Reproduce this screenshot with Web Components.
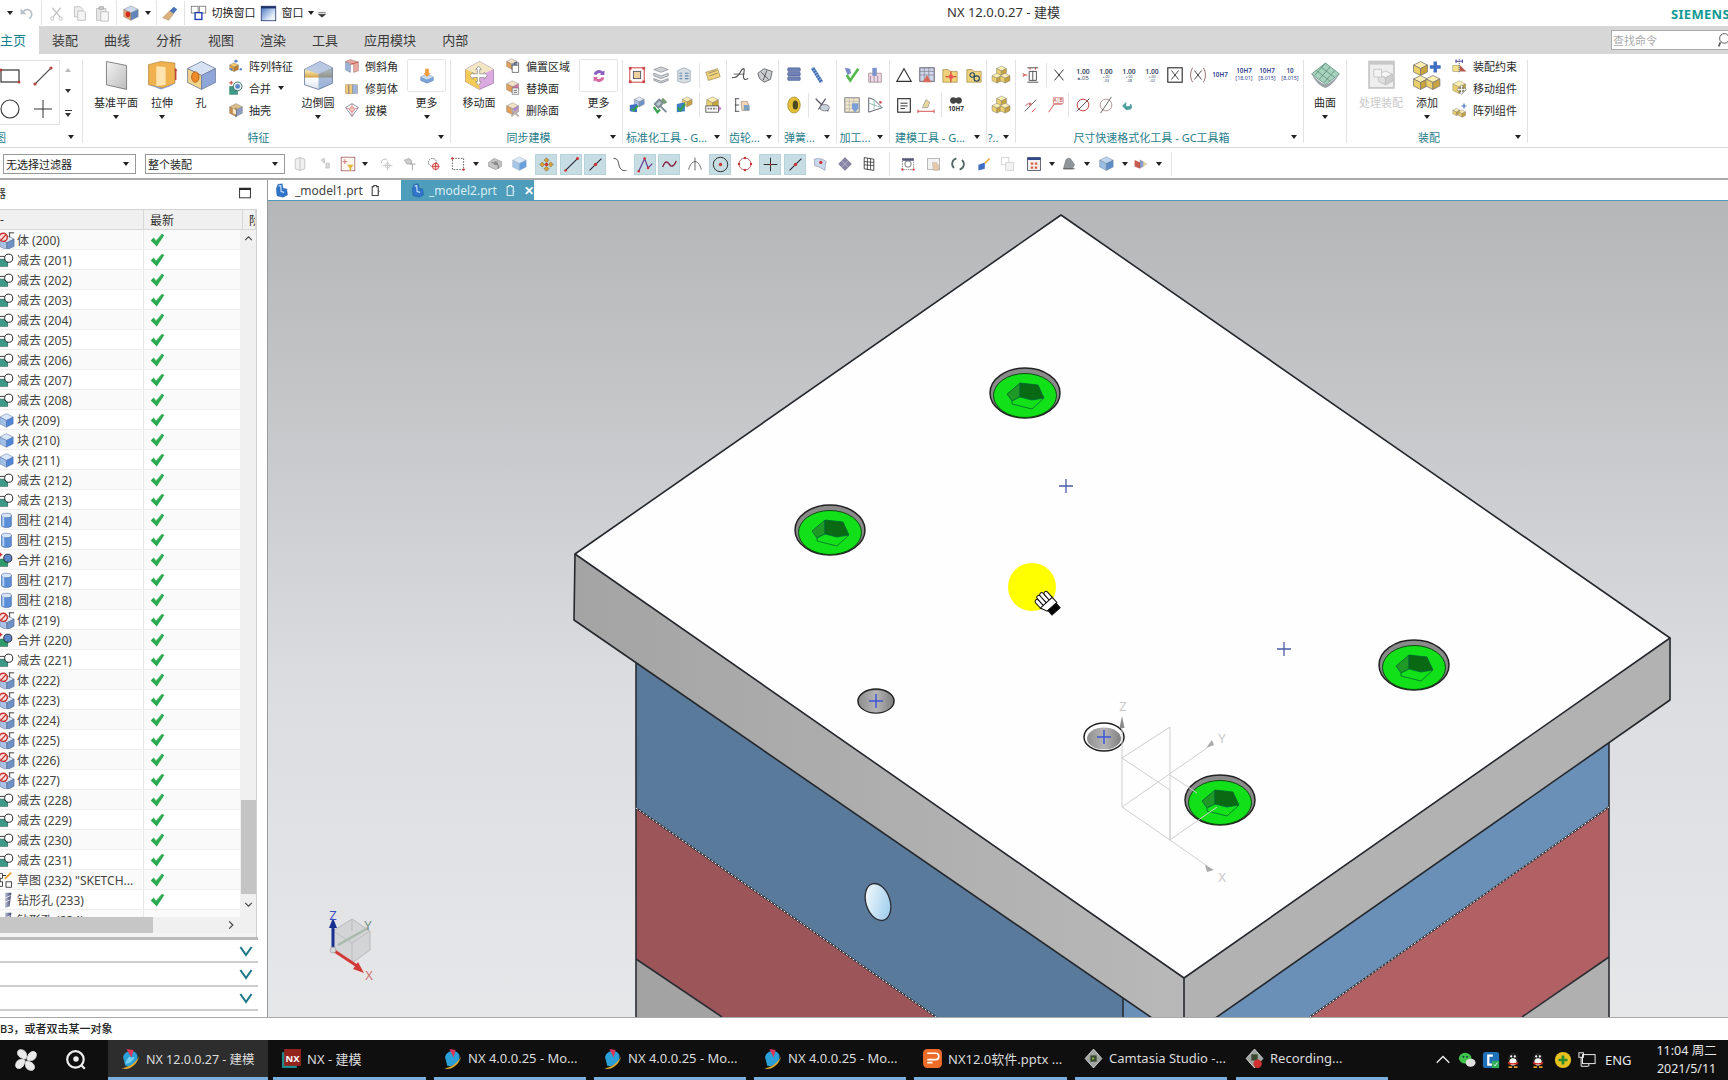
<!DOCTYPE html>
<html lang="zh-CN">
<head>
<meta charset="utf-8">
<title>NX 12.0.0.27 - 建模</title>
<style>
html,body{margin:0;padding:0;width:1728px;height:1080px;overflow:hidden;background:#fff}
body{display:flex;flex-direction:column;font-family:"Noto Sans","Noto Sans CJK SC",sans-serif;color:#333}
.main{display:flex;height:837px}
</style>
</head>
<body>
<nx-titlebar></nx-titlebar>
<nx-tabbar></nx-tabbar>
<nx-ribbon>
  <ribbon-group style="width:83px" label="图" clip>
    <sketch-gallery></sketch-gallery>
  </ribbon-group>
  <ribbon-group style="width:368px" label="特征">
    <big-btn style="margin-left:10px;width:46px" icon="datum" label="基准平面" caret></big-btn>
    <big-btn style="margin-left:3px;width:40px" icon="extrude" label="拉伸" caret></big-btn>
    <big-btn style="margin-left:4px;width:30px" icon="hole" label="孔"></big-btn>
    <tool-col style="margin-left:12px;width:68px">
      <small-btn icon="pattern" label="阵列特征"></small-btn>
      <small-btn icon="unite" label="合并" caret></small-btn>
      <small-btn icon="shell" label="抽壳"></small-btn>
    </tool-col>
    <big-btn style="margin-left:2px;width:40px" icon="blend" label="边倒圆" caret></big-btn>
    <tool-col style="margin-left:6px;width:54px">
      <small-btn icon="chamfer" label="倒斜角"></small-btn>
      <small-btn icon="trim" label="修剪体"></small-btn>
      <small-btn icon="draft" label="拔模"></small-btn>
    </tool-col>
    <big-btn style="margin-left:10px;width:37px" icon="more1" label="更多" caret boxed></big-btn>
  </ribbon-group>
  <ribbon-group style="width:172px" label="同步建模">
    <big-btn style="margin-left:10px;width:36px" icon="moveface" label="移动面"></big-btn>
    <tool-col style="margin-left:8px;width:70px">
      <small-btn icon="offset" label="偏置区域"></small-btn>
      <small-btn icon="replace" label="替换面"></small-btn>
      <small-btn icon="delface" label="删除面"></small-btn>
    </tool-col>
    <big-btn style="margin-left:5px;width:37px" icon="more2" label="更多" caret boxed></big-btn>
  </ribbon-group>
  <ribbon-group style="width:104px" label="标准化工具 - G..." stack>
    <tool-row class="r1" origin="623" items="637:std1 661:std2 684:std3 699:sep 713:std4"></tool-row>
    <tool-row origin="623" items="637:std5 661:std6 684:std7 699:sep 713:std8"></tool-row>
  </ribbon-group>
  <ribbon-group style="width:52px" label="齿轮..." stack>
    <tool-row class="r1" origin="727" items="740:gear1 765:gear2"></tool-row>
    <tool-row origin="727" items="742:gear3"></tool-row>
  </ribbon-group>
  <ribbon-group style="width:58px" label="弹簧..." stack>
    <tool-row class="r1" origin="779" items="794:spring1 817:spring2"></tool-row>
    <tool-row origin="779" items="794:spring3 808:sep 822:spring4"></tool-row>
  </ribbon-group>
  <ribbon-group style="width:53px" label="加工..." stack>
    <tool-row class="r1" origin="837" items="852:mach1 875:mach2"></tool-row>
    <tool-row origin="837" items="852:mach3 875:mach4"></tool-row>
  </ribbon-group>
  <ribbon-group style="width:97px" label="建模工具 - G..." stack>
    <tool-row class="r1" origin="890" items="904:model1 927:model2 950:model3 974:model4"></tool-row>
    <tool-row origin="890" items="904:model5 926:model6 941:sep 956:model7"></tool-row>
  </ribbon-group>
  <ribbon-group style="width:29px" label="?.." stack>
    <tool-row class="r1" origin="987" items="1001:gold"></tool-row>
    <tool-row origin="987" items="1001:gold"></tool-row>
  </ribbon-group>
  <ribbon-group style="width:288px" label="尺寸快速格式化工具 - GC工具箱" stack>
    <tool-row class="r1" origin="1016" items="1031:dim1 1046:sep 1059:xmark 1083:tol1 1106:tol2 1129:tol3 1152:tol4 1175:boxx 1198:parx 1220:fit1 1244:fit2 1267:fit3 1290:fit4"></tool-row>
    <tool-row origin="1016" items="1031:dim2 1055:dim3 1068:sep 1083:dim4 1106:dim5 1128:dim6"></tool-row>
  </ribbon-group>
  <ribbon-group style="width:43px" nolabel>
    <big-btn style="width:42px" icon="surface" label="曲面" caret></big-btn>
  </ribbon-group>
  <ribbon-group style="width:181px" label="装配">
    <big-btn style="margin-left:11px;width:46px;color:#c9c9c9" icon="manage" label="处理装配"></big-btn>
    <big-btn style="margin-left:3px;width:40px" icon="addcomp" label="添加" caret></big-btn>
    <tool-col style="margin-left:5px;width:70px">
      <small-btn icon="constraint" label="装配约束"></small-btn>
      <small-btn icon="movecomp" label="移动组件"></small-btn>
      <small-btn icon="patcomp" label="阵列组件"></small-btn>
    </tool-col>
  </ribbon-group>
</nx-ribbon>
<nx-selbar></nx-selbar>
<div class="main">
  <nx-navigator></nx-navigator>
  <nx-viewport></nx-viewport>
</div>
<nx-status>B3，或者双击某一对象</nx-status>
<nx-taskbar></nx-taskbar>
<script>
const BLUE=['#dfe9f8','#a9c1e6','#6f92c9'],GOLD=['#fbeeb0','#eccf6a','#c9a33e'],GREY=['#f0f0f0','#d0d0d0','#adadad'];
const iso=(x,y,s,c,st='#7a7a7a')=>{
  const h=s/2,q=s/4;
  return `<g stroke="${st}" stroke-width=".5" stroke-linejoin="round"><path d="M${x} ${y+q}L${x+h} ${y}L${x+s} ${y+q}L${x+h} ${y+2*q}z" fill="${c[0]}"/><path d="M${x} ${y+q}L${x+h} ${y+2*q}V${y+s}L${x} ${y+s-q}z" fill="${c[1]}"/><path d="M${x+s} ${y+q}L${x+h} ${y+2*q}V${y+s}L${x+s} ${y+s-q}z" fill="${c[2]}"/></g>`;
};
const txt=(y,s,t,c='#37496b',w=400)=>`<text x="10" y="${y}" text-anchor="middle" font-size="${s}" font-weight="${w}" fill="${c}">${t}</text>`;
const ICONS={
  undo:'<path d="M6 8c3-4 9-3 10 2 .5 3-1 5-3 6" fill="none" stroke="#b8c0c8" stroke-width="2"/><path d="M3 4v7h7z" fill="#b8c0c8"/>',
  cut:'<path d="M5 3l9 11M15 3L6 14" stroke="#bbb" stroke-width="1.3"/><circle cx="5" cy="16" r="2" fill="none" stroke="#bbb"/><circle cx="15" cy="16" r="2" fill="none" stroke="#bbb"/>',
  copy:'<path d="M4 2h7l3 3v9H4z" fill="#eee" stroke="#bbb"/><path d="M8 7h7l2 2v9H8z" fill="#f4f4f4" stroke="#bbb"/>',
  paste:'<path d="M3 4h11v14H3z" fill="#e6e6e6" stroke="#bbb"/><path d="M6 2h5v3H6z" fill="#ccc" stroke="#aaa"/><path d="M8 8h9v11H8z" fill="#f6f6f6" stroke="#bbb"/>',
  part:iso(2,1,17,['#cdd9ea','#e4a16a','#5f85bd'])+'<ellipse cx="7" cy="11" rx="2.6" ry="3.4" fill="#d02a20"/>',
  paint:'<path d="M2 15l8-8 5 3-6 8z" fill="#dcb27c" stroke="#9a7a50" stroke-width=".5"/><path d="M10 7l5-5 4 3-4 5z" fill="#4a72b8"/>',
  switchwin:'<rect x="1.5" y="1.5" width="8" height="8" fill="#fff" stroke="#777"/><rect x="11" y="1.5" width="7.5" height="8" fill="#fff" stroke="#777"/><rect x="6" y="9" width="8" height="8" fill="#fff" stroke="#1b3fae" stroke-width="1.6"/>',
  window:'<defs><linearGradient id="w" x1="0" y1="0" x2="1" y2="1"><stop offset="0" stop-color="#3f6fc0"/><stop offset=".7" stop-color="#dfeaf8"/><stop offset="1" stop-color="#fff"/></linearGradient></defs><rect x="1.5" y="1.5" width="17" height="17" fill="url(#w)" stroke="#2a3f70"/><rect x="1.5" y="1.5" width="17" height="2.5" fill="#1d3268"/>',
  caretm:'<path d="M4 9h12M4 12l6 5 6-5z" stroke="#333" fill="#333"/>',
  sep:'',
  skrect:'<rect x="1" y="4" width="18" height="12" fill="none" stroke="#222" stroke-width="1.1"/><circle cx="1" cy="4" r="1.5" fill="#b5443f"/><circle cx="19" cy="16" r="1.5" fill="#b5443f"/>',
  skline:'<path d="M2 18L18 2" stroke="#555" stroke-width="1.1"/><circle cx="2" cy="18" r="1.6" fill="#b5443f"/><circle cx="18" cy="2" r="1.6" fill="#b5443f"/>',
  skcircle:'<circle cx="10" cy="10" r="9" fill="none" stroke="#333" stroke-width="1.1"/>',
  skplus:'<path d="M10 1v18M1 10h18" stroke="#333" stroke-width="1"/>',
  datum:'<defs><linearGradient id="d" x1="0" y1="0" x2="1" y2="1"><stop offset="0" stop-color="#f2f2f2"/><stop offset="1" stop-color="#bdbdbd"/></linearGradient></defs><path d="M3.5 1L16.5 3.5V19L3.5 16z" fill="url(#d)" stroke="#666" stroke-width=".5"/>',
  extrude:'<path d="M1 3l8-2 9 1v13l-8 3-9-2z" fill="#f0b24e" stroke="#a9772b" stroke-width=".4"/><path d="M6 4l6 .5V16l-6 1z" fill="#fde4ae"/><path d="M1 16l9 2 8-3-3 2-6 2z" fill="#8c9fce"/><path d="M18.500 6v7" stroke="#c2453a"/><path d="M17.500 7l1-2 1 2z" fill="#c2453a"/>',
  hole:iso(1,1,18,['#d7e2f3','#f1d28b','#8ea7d8'],'#6b7a9c')+'<ellipse cx="6" cy="11" rx="2.400" ry="3.400" fill="#ee8a2a" stroke="#a85b12" stroke-width=".5"/>',
  pattern:iso(2,6,11,['#f4c86b','#e6a43c','#c27b26'])+'<path d="M10 2l3 2-3 2-3-2z" fill="#5a86c9"/><circle cx="4" cy="14" r="1.500" fill="#5a86c9"/><circle cx="16" cy="14" r="1.500" fill="#5a86c9"/>',
  unite:'<path d="M2 8h10v10H2z" fill="#3d9a86" stroke="#1c5a4d" stroke-width=".5"/><circle cx="12" cy="8" r="5.500" fill="#e7eef0" stroke="#1c5a4d"/><circle cx="12" cy="8" r="3" fill="#5a86c9"/><path d="M4 1v5M1.500 3.500h5" stroke="#c8352c" stroke-width="1.200"/>',
  shell:iso(2,2,16,['#e0c08a','#c98a4a','#8b9cc4'])+'<path d="M10 7v12" stroke="#555"/><path d="M6 8l4 2v6l-4-2z" fill="#f7e6c6"/>',
  blend:'<defs><linearGradient id="b" x1="0" y1="0" x2="0" y2="1"><stop offset="0" stop-color="#7f9ed2"/><stop offset=".35" stop-color="#f7e4a6"/><stop offset=".55" stop-color="#d9a64f"/><stop offset=".6" stop-color="#fff"/><stop offset="1" stop-color="#dbe3ee"/></linearGradient></defs><path d="M1 6l10-5 8 4v10l-9 4-9-3z" fill="url(#b)" stroke="#5a6a8c" stroke-width=".5"/><path d="M10 7c2-.5 7-1 9-2v10l-9 4z" fill="#5f85bd" opacity=".55"/><path d="M1 6l9 3 9-4-8-4z" fill="#b8c9e6" opacity=".9"/>',
  chamfer:'<path d="M2 4l6-2 10 3v11l-6 2V8L2 5z" fill="#e8a8a0" stroke="#7a5c50" stroke-width=".5"/><path d="M2 5l6 3v10l-6-3z" fill="#9db4d8" stroke="#5a6a8c" stroke-width=".5"/><path d="M8 8l10-3" stroke="#b5443f"/>',
  trim:'<rect x="2" y="6" width="15" height="11" fill="#f2c877" stroke="#8a6a30" stroke-width=".5"/><path d="M6 6v11M11 6v11" stroke="#5a6a8c"/><rect x="11" y="6" width="6" height="11" fill="#9db4d8"/>',
  draft:'<path d="M10 2l8 5-8 11-8-11z" fill="#fff" stroke="#6a7a9c"/><path d="M10 2v16M2 7l8 3 8-3" stroke="#b5443f" stroke-width=".7" fill="none"/><circle cx="10" cy="9" r="3" fill="#f3c3b8" stroke="#b5443f" stroke-width=".5"/>',
  more1:'<path d="M3 11l7-3 7 3v4l-7 3-7-3z" fill="#7ca3d9" stroke="#4f6f9c" stroke-width=".5"/><path d="M3 11l7 3 7-3-7-3z" fill="#cadbf0"/><path d="M8 2h4v5h2l-4 4-4-4h2z" fill="#f09a33"/>',
  more2:'<path d="M4 8a6 6 0 0 1 10-3l2-1v5h-5l1.500-1.500A3.500 3.500 0 0 0 7 9z" fill="#8a5fc0"/><path d="M16 12a6 6 0 0 1-10 3l-2 1v-5h5l-1.500 1.500A3.500 3.500 0 0 0 13 11z" fill="#d66ba0"/>',
  moveface:'<path d="M10 1l9 5v9l-9 4-9-5V6z" fill="#dca9e0" stroke="#8a6a9c" stroke-width=".4"/><path d="M1 6l9 4v9l-9-5z" fill="#f2cc55"/><path d="M10 1l9 5-9 4-9-4z" fill="#f3e6c2"/><path d="M14 7.500l2 2.500h-1.200v3H18v-1.200l2 2.500-2 2.500v-1.300h-3.200v3H16l-2 2.500-2-2.500h1.200v-3H10v1.300l-2-2.500 2-2.500v1.200h3.200v-3H12z" transform="translate(-3.500 -3) scale(.92)" fill="#fff" stroke="#888" stroke-width=".5"/>',
  offset:iso(2,1,13,['#f2e2c8','#e0a05a','#88a4d0'])+'<path d="M9 9h8v9H9z" fill="#fff" stroke="#333" stroke-width=".8"/><path d="M12 9v-3h5v3" fill="none" stroke="#333" stroke-width=".8"/>',
  replace:iso(2,1,15,['#f2e2c8','#e0a05a','#d277a8'])+'<path d="M9 10h8v8H9z" fill="#f4f4f4" stroke="#555" stroke-width=".7"/><path d="M11 13h4M11 15.500h4" stroke="#555"/>',
  delface:iso(2,1,15,['#f2e2c8','#e0a05a','#b78ad6'])+'<path d="M8 9l9 9M17 9l-9 9" stroke="#b9b0a8" stroke-width="2.500"/>',
  std1:'<rect x="2" y="2" width="16" height="16" fill="none" stroke="#c44" stroke-width="1.100"/><rect x="1" y="1" width="3" height="3" fill="#c44"/><rect x="16" y="1" width="3" height="3" fill="#c44"/><rect x="1" y="16" width="3" height="3" fill="#c44"/><rect x="16" y="16" width="3" height="3" fill="#c44"/><rect x="6" y="6" width="8" height="8" fill="#f0d0a0" stroke="#556"/>',
  std2:'<path d="M10 1l8 3-8 3-8-3zM2 8l8 3 8-3v3l-8 3-8-3zM2 14l8 3 8-3v2l-8 3-8-3z" fill="#cfd3d6" stroke="#667" stroke-width=".6"/>',
  std3:'<path d="M3 5l7-3 7 3v12l-7 2-7-2z" fill="#d7dee4" stroke="#7f8a94" stroke-width=".6"/><path d="M11 8h4M11 11h4M11 14h4M5 8h3M5 11h3M5 14h3" stroke="#68a" stroke-width="1.200"/>',
  std4:'<path d="M2 7l13-4 3 9-13 4z" fill="#f0d27a" stroke="#8a6a30" stroke-width=".6"/><path d="M5 8l9-3M6 11l9-3" stroke="#776" stroke-width=".8"/>',
  std5:iso(7,1,11,BLUE)+'<path d="M2 10l8-1v9l-8-1z" fill="#3f6fc4"/><path d="M4 14l2 2 5-5" stroke="#2fa04a" stroke-width="2.200" fill="none"/>',
  std6:'<path d="M3 9l5-5 4 4-5 5zM9 11l7 7" stroke="#7a8a96" stroke-width="2" fill="#b8c4ca"/><path d="M2 12l4 6 3-3" stroke="#39a04c" stroke-width="2.500" fill="none"/><path d="M12 2l5 5-3 2-4-4z" fill="#6f9c70"/>',
  std7:iso(8,1,11,GOLD)+'<path d="M2 9l9-2v10l-9 1z" fill="#3f7fc4"/><path d="M3 13l3 3 5-7" stroke="#2fa04a" stroke-width="2.200" fill="none"/>',
  std8:iso(3,1,13,GOLD)+'<rect x="2" y="11" width="14" height="7" fill="#fff" stroke="#555"/><path d="M4 14h10" stroke="#777" stroke-dasharray="2 1" stroke-width="2"/><path d="M17 11l2 3-2 3z" fill="#b44ac0"/>',
  gear1:'<path d="M1 13c3 0 6-1 8-4s3-6 5-6-1 7 0 10 3 2 5 1" fill="none" stroke="#555" stroke-width="1.300"/><path d="M3 9h12" stroke="#555"/>',
  gear2:'<path d="M2 8l7-5 9 3-2 9-7 3-5-4z" fill="#c9cdd2" stroke="#444" stroke-width=".8"/><path d="M6 7l8 8M12 5l-4 11" stroke="#333" stroke-width=".8"/>',
  gear3:'<path d="M2 3h5M2 10h5M2 17h5M3 3v14" stroke="#444"/><path d="M9 6h7l2 6v4h-8z" fill="#f3d6b8" stroke="#8a6a50" stroke-width=".6"/><rect x="12" y="10" width="6" height="6" fill="#7aa0c4"/>',
  spring1:'<rect x="3" y="2" width="14" height="4" rx="1" fill="#6f83b8" stroke="#33457a" stroke-width=".5"/><rect x="3" y="7" width="14" height="4" rx="1" fill="#6f83b8" stroke="#33457a" stroke-width=".5"/><rect x="3" y="12" width="14" height="4" rx="1" fill="#6f83b8" stroke="#33457a" stroke-width=".5"/>',
  spring2:'<path d="M5 2l10 16" stroke="#3f68ad" stroke-width="4"/><path d="M5 2l10 16" stroke="#a9c3e8" stroke-width="4" stroke-dasharray="1 2"/>',
  spring3:'<ellipse cx="10" cy="10" rx="7" ry="9" fill="#e3bf36" stroke="#8a7220" stroke-width=".6"/><ellipse cx="11.500" cy="10" rx="3" ry="5" fill="#4a4a20"/>',
  spring4:'<path d="M3 3l14 14M14 3L6 15" stroke="#556" stroke-width="1.400"/><ellipse cx="13" cy="13" rx="5" ry="3.500" fill="#c7d2dc" stroke="#556" stroke-width=".7"/>',
  mach1:'<path d="M2 2l6 1 1 5-4 2z" fill="#7a8ac6"/><path d="M4 10l4 6 9-13" stroke="#52b84a" stroke-width="3" fill="none"/>',
  mach2:'<path d="M3 8h14v10H3z" fill="#f0d8e4" stroke="#a99"/><path d="M7 2h5v9H7z" fill="#7d93cc"/><path d="M5 11v7M9 11v7M13 11v7" stroke="#9a8aa0"/>',
  mach3:'<rect x="2" y="2" width="16" height="16" fill="#f0e6c8" stroke="#778"/><path d="M2 6h16M2 10h16M2 14h16M7 2v16M12 2v16" stroke="#aaa" stroke-width=".6"/><path d="M10 8h7v6l-3.500 4L10 14z" fill="#7a9fd6"/>',
  mach4:'<path d="M3 2v16l15-5-9-9z" fill="none" stroke="#556" stroke-width="1"/><path d="M3 8l15 5M9 4v11" stroke="#7a9" stroke-width=".8"/><circle cx="16" cy="7" r="1.500" fill="#c55"/>',
  model1:'<path d="M10 3l8 14H2z" fill="none" stroke="#333" stroke-width="1.300"/>',
  model2:'<rect x="2" y="2" width="16" height="15" fill="#cfd6ea" stroke="#556"/><path d="M2 6h16M2 10h16M7 2v15M12 2v15" stroke="#778" stroke-width=".7"/><path d="M10 10l5 8H5z" fill="#d86a5a"/>',
  model3:'<path d="M2 4h6l2 2h8v12H2z" fill="#efd27a" stroke="#8a6a30" stroke-width=".6"/><path d="M11 6v12M5 12h12" stroke="#c33" stroke-width="1.200"/><circle cx="11" cy="12" r="2.500" fill="#e55"/>',
  model4:'<path d="M2 4h6l2 2h8v12H2z" fill="#efd27a" stroke="#8a6a30" stroke-width=".6"/><circle cx="8" cy="10" r="2.500" fill="none" stroke="#246" stroke-width="1.200"/><circle cx="13" cy="14" r="3" fill="none" stroke="#246" stroke-width="1.200"/>',
  model5:'<rect x="3" y="3" width="14" height="15" fill="#fff" stroke="#222" stroke-width="1.200"/><path d="M6 8h8M6 11h8M6 14h5" stroke="#222"/>',
  model6:'<path d="M1 15v4M19 15v4M1 17h18" stroke="#c44"/><path d="M6 13l4-9 4 3-2 6z" fill="#e8d8a0" stroke="#777" stroke-width=".6"/>',
  model7:'<circle cx="7" cy="5" r="3.500" fill="#444"/><circle cx="13" cy="5" r="3.500" fill="#444"/>'+txt(17,7,'10H7','#333',700),
  gold:iso(5,0,11,GOLD)+iso(0,8,11,GOLD)+iso(9,8,11,GOLD),
  dim1:'<path d="M1 10h5M1 8l2 2-2 2" stroke="#c33" fill="none"/><path d="M8 6h8v10H8zM12 6v10M6 2h12M6 18h12" stroke="#444" fill="none"/><path d="M9 2v2M15 2v2" stroke="#c33"/>',
  dim2:'<path d="M3 17L16 4" stroke="#555"/><circle cx="9" cy="9" r="1.800" fill="#c77"/><path d="M4 11l3-3M11 18l4-4" stroke="#c33"/>',
  dim3:'<path d="M3 18L9 9M9 9h9" stroke="#c44" fill="none"/><rect x="8" y="2" width="11" height="6" fill="#fff" stroke="#c44" stroke-width=".6"/><text x="13.500" y="7" font-size="5.500" text-anchor="middle" fill="#a33">A|B</text>',
  dim4:'<circle cx="10" cy="10" r="6.500" fill="none" stroke="#c03030"/><path d="M3 17L17 3" stroke="#444"/>',
  dim5:'<circle cx="10" cy="10" r="6.500" fill="none" stroke="#b09090"/><path d="M4 19L16 1" stroke="#555"/>',
  dim6:'<path d="M8 7l-4 4 4 4v-3c3 0 5 0 5-3 1 3 3 6-5 6" fill="#4aa3a0" stroke="#3a8c8a" stroke-width=".8"/>',
  xmark:'<path d="M5 4l10 12M15 4L5 16" stroke="#333" stroke-width="1.100"/>',
  tol1:txt(9,7.500,'1.00','#37496b',600)+txt(16,6.500,'±.05'),
  tol2:txt(9,7.500,'1.00','#37496b',600)+txt(13,4,'+.00')+txt(18,4,'-.03'),
  tol3:txt(9,7.500,'1.00','#37496b',600)+txt(13,4,'+.00')+txt(18,4,'-.08'),
  tol4:txt(9,7.500,'1.00','#37496b',600)+txt(13,4,'+.00')+txt(18,4,'-.02'),
  boxx:'<rect x="2" y="2" width="16" height="16" fill="none" stroke="#222" stroke-width="1.200"/><path d="M6 5l8 10M14 5L6 15" stroke="#333"/>',
  parx:'<path d="M4 2c-3 5-3 11 0 16M16 2c3 5 3 11 0 16" stroke="#8a5a5a" fill="none"/><path d="M6 5l8 10M14 5L6 15" stroke="#333"/>',
  fit1:txt(12,7,'10H7','#2f3f8f',600),
  fit2:txt(8,7,'10H7','#2f3f8f',600)+txt(15,6,'[18.01]','#2f3f8f'),
  fit3:txt(8,7,'10H7','#2f3f8f',600)+txt(15,6,'[8.015]','#2f3f8f'),
  fit4:txt(8,7,'10','#2f3f8f',600)+txt(15,6,'[8.015]','#2f3f8f'),
  surface:'<path d="M1 9l9-7 9 7-9 7-1-1z" fill="#a7d2bd" stroke="#5b8c7a" stroke-width=".5"/><path d="M1 9c3 6 6 8 9 9 3-1 6-4 9-9-3 3-6 6-9 7-3-1-6-4-9-7z" fill="#9aa3a6"/><path d="M4 6.700l9 7M7 4.400l9 7M10 2l-7 8M13 4.400l-7 8M16 6.700l-7 8" stroke="#5b8c7a" stroke-width=".5"/>',
  manage:'<rect x="2" y="1" width="16" height="17" fill="#eee" stroke="#c8c8c8" stroke-width="1.200"/><rect x="2" y="1" width="16" height="2" fill="#c8c8c8"/>'+iso(8,7,9,['#f5f5f5','#e0e0e0','#cfcfcf'],'#bbb')+'<path d="M5 6h5v5H5z" fill="#f3f3f3" stroke="#c5c5c5" stroke-width=".6"/>',
  addcomp:iso(1,1,9,GOLD)+iso(1,10,9,GOLD)+iso(9,10,9,GOLD)+'<path d="M15 1v7M11.500 4.500h7" stroke="#3f6fc4" stroke-width="2.200"/>',
  constraint:'<rect x="1" y="9" width="8" height="8" fill="#f4e08a" stroke="#887" stroke-width=".6"/><path d="M10 9l8 8h-8z" fill="#b45a50"/><path d="M5 4h8M5 2v4M13 2v4" stroke="#4a3fa0" stroke-width="1.400"/><path d="M9 1v18" stroke="#444" stroke-dasharray="1.500 1"/>',
  movecomp:iso(1,1,16,GOLD)+'<path d="M12 6l2.500 3h-1.500v2h2v-1.500l3 2.500-3 2.500V13h-2v2h1.500L12 18l-2.500-3H11v-2H9v1.500L6 12l3-2.500V11h2V9H9.500z" fill="#fff" stroke="#333" stroke-width=".5"/>',
  patcomp:iso(1,8,9,GOLD)+iso(8,10,9,GOLD)+'<path d="M15 2v6M12 5h6" stroke="#3f6fc4" stroke-width="1.400"/>',
  sel1:'<path d="M4 4l6-2 6 2v12l-6 2-6-2z" fill="#f0f0f0" stroke="#bbb"/><path d="M10 2v16" stroke="#bbb"/>',
  sel2:'<path d="M4 5l4-2v6zM10 9h4v6h-4z" fill="#ddd" stroke="#bbb"/>',
  sel3:'<rect x="1.500" y="1.500" width="17" height="17" fill="#fdf6f0" stroke="#a06060"/><path d="M6 4v6M3 7h6" stroke="#c66" /><path d="M9 11h8l-3 4v3h-2v-3z" fill="#e0b63a"/>',
  sel4:'<path d="M4 9c0-4 4-6 7-5" stroke="#aaa" fill="none"/><circle cx="12" cy="12" r="3" fill="none" stroke="#c7c7c7"/><path d="M12 6v12M6 12h12" stroke="#bbb"/>',
  sel5:'<path d="M3 5l6-2 3 3v4H6z" fill="#ccc" stroke="#aaa"/><path d="M10 10h7M13 10v8" stroke="#999"/>',
  sel6:'<circle cx="8" cy="8" r="5" fill="none" stroke="#555" stroke-dasharray="2 1"/><circle cx="12" cy="13" r="4" fill="#f3d8d0" stroke="#c33"/><path d="M12 8v10M7 13h10" stroke="#c33"/>',
  sel7:'<rect x="3" y="3" width="14" height="14" fill="none" stroke="#444" stroke-dasharray="2 1.500"/><circle cx="17" cy="17" r="1.500" fill="#c33"/><circle cx="3" cy="3" r="1.500" fill="#c33"/>',
  sel8:'<path d="M2 8l7-5 9 4v6l-7 4-9-4z" fill="#c5c5c5" stroke="#777" stroke-width=".6"/><path d="M6 8l8 3v5" stroke="#666" fill="none"/><circle cx="11" cy="9" r="2.500" fill="#888"/>',
  sel9:iso(2,1,17,['#dbe8f7','#a7c7ea','#67a0dc'],'#9ab'),
  hl1:'<path d="M10 2l3 3-3 3-3-3zM10 12l3 3-3 3-3-3zM2 10l3-3 3 3-3 3zM12 10l3-3 3 3-3 3z" fill="#d8a030" stroke="#555" stroke-width=".5"/><circle cx="10" cy="10" r="2" fill="#c33"/>',
  hl2:'<path d="M3 17L17 3" stroke="#223" stroke-width="1.200"/><circle cx="17" cy="3" r="1.800" fill="#c33"/><circle cx="3" cy="17" r="1.500" fill="#c33"/>',
  hl3:'<path d="M3 17L17 3" stroke="#223" stroke-width="1.200"/><circle cx="10" cy="10" r="2" fill="#c33"/>',
  sw1:'<path d="M2 3c3 0 5 1 6 5s1 7 4 9 4 1 6 1" fill="none" stroke="#333" stroke-width="1.100"/>',
  sw2:'<path d="M2 18L9 3l4 11 5-5" fill="none" stroke="#6a3f90" stroke-width="1.500"/><circle cx="9" cy="3" r="1.500" fill="#c33"/><circle cx="2" cy="18" r="1.500" fill="#c33"/><circle cx="13" cy="14" r="1.500" fill="#c33"/>',
  sw3:'<path d="M2 13c3-9 6-6 8-3s5 3 8-4" fill="none" stroke="#8a1f40" stroke-width="1.600"/>',
  sw4:'<path d="M2 17c2-7 5-10 8-10s6 3 8 10M10 2v16" fill="none" stroke="#333" stroke-width=".9"/>',
  sw5:'<circle cx="10" cy="10" r="8.500" fill="none" stroke="#222" stroke-width="1.100"/><circle cx="10" cy="10" r="2" fill="#c33"/>',
  sw6:'<circle cx="10" cy="10" r="7.500" fill="none" stroke="#b05050" stroke-width="1.100"/><circle cx="10" cy="2.500" r="1.500" fill="#c33"/><circle cx="10" cy="17.500" r="1.500" fill="#c33"/><circle cx="2.500" cy="10" r="1.500" fill="#c33"/><circle cx="17.500" cy="10" r="1.500" fill="#c33"/>',
  sw7:'<path d="M10 2v16M2 10h16" stroke="#222" stroke-width="1.100"/><circle cx="10" cy="10" r="1.200" fill="#c33"/>',
  sw9:'<path d="M3 4c6-2 11 0 15 3-2 4-1 8-2 11-4-3-9-5-13-6z" fill="#c7d8ec" stroke="#778" stroke-width=".6"/><circle cx="11" cy="8" r="2" fill="#c33"/>',
  sw10:'<path d="M10 2l8 8-8 8-8-8z" fill="#8a86a8" stroke="#556" stroke-width=".6"/><path d="M6 6l8 8M14 6l-8 8" stroke="#ccd" stroke-width=".7"/>',
  sw11:'<path d="M4 2l12 2v14L4 16z" fill="#fff" stroke="#222" stroke-width="1"/><path d="M8 3v14M12 3.500V17M4 7l12 1M4 11l12 1" stroke="#222" stroke-width=".9"/>',
  vw1:'<rect x="3" y="3" width="14" height="14" fill="#fff" stroke="#777" stroke-dasharray="2 1"/><circle cx="10" cy="10" r="4" fill="none" stroke="#556"/><rect x="3" y="3" width="14" height="3" fill="#557"/><circle cx="3" cy="17" r="1.400" fill="#c33"/><circle cx="17" cy="17" r="1.400" fill="#c33"/>',
  vw2:'<rect x="2" y="3" width="15" height="14" fill="#f3f3f3" stroke="#aaa"/><path d="M8 8h5l3 4v6H9z" fill="#e6c8a8" stroke="#aaa" stroke-width=".5"/>',
  vw3:'<path d="M5 15a7 7 0 0 1 3-12M15 5a7 7 0 0 1-3 12" fill="none" stroke="#566" stroke-width="2.200"/>',
  vw4:'<path d="M3 11l8-3v8l-8 2z" fill="#3f6fc4"/><path d="M11 9l6-6" stroke="#e8a030" stroke-width="1.800"/>',
  vw5:'<rect x="2" y="2" width="9" height="9" fill="none" stroke="#ccc"/><path d="M7 8h10v10H7z" fill="#f2f2f2" stroke="#ccc"/>',
  vw6:'<rect x="2" y="2" width="16" height="16" fill="#f4f0f0" stroke="#445"/><rect x="2" y="2" width="16" height="3" fill="#2f4a8a"/><path d="M6 8h3v3H6zM11 8h3v3h-3zM6 13h3v3H6zM11 13h3v3h-3z" fill="#d86040"/>',
  vw7:'<path d="M3 16l3-11c2-3 6-3 7 0l4 6-3 5z" fill="#8f9498" stroke="#555" stroke-width=".5"/><path d="M3 16h14" stroke="#555" stroke-width="1.200"/>',
  vw8:iso(2,1,17,['#bcd5ee','#9cbde2','#5f8fc9'],'#678'),
  vw9:'<path d="M2 5l7 3v8l-7-3z" fill="#c85a50"/><path d="M9 5l8 5-8 5z" fill="#8a9ed2" stroke="#556" stroke-width=".5"/><path d="M13 6l4 4-4 4" fill="#e8d8a0"/>',
  search:'<circle cx="8" cy="8" r="6" fill="#fff" stroke="#555" stroke-width="1.200"/><path d="M3 13l-2 5" stroke="#555" stroke-width="2"/>',
  body:iso(3,5,16,BLUE,'#456')+'<circle cx="7" cy="7" r="4.500" fill="#f5dede" stroke="#cc2f2a" stroke-width="1.600"/><path d="M4.500 10L10 4" stroke="#cc2f2a" stroke-width="1.400"/><path d="M13 2h6M14 2v5" stroke="#333"/>',
  subtract:'<path d="M1 6h12" stroke="#333"/><rect x="2" y="9" width="10" height="8" fill="#3d9a86" stroke="#1c5a4d" stroke-width=".6"/><circle cx="13" cy="8" r="4.500" fill="#fff" stroke="#222" stroke-width="1.100"/>',
  block:iso(3,3,15,['#d9e6f7','#a2bfe6','#4f86d6'],'#4a6a9c'),
  cyl:'<path d="M5 5v11c0 3 11 3 11 0V5z" fill="#5a8fd8" stroke="#3a5a9c" stroke-width=".6"/><ellipse cx="10.500" cy="5" rx="5.500" ry="2.500" fill="#d9e6f7" stroke="#3a5a9c" stroke-width=".6"/><path d="M7 6v11" stroke="#bcd4f2" stroke-width="2"/>',
  union:'<rect x="2" y="9" width="10" height="8" fill="#2f9a6a" stroke="#1c5a4d" stroke-width=".6"/><circle cx="12" cy="8" r="4.500" fill="#5a86c9" stroke="#222" stroke-width="1"/><path d="M4 2v4M2 4h4" stroke="#c33" stroke-width="1.200"/>',
  sketch:'<rect x="1" y="3" width="5" height="5" fill="#fff" stroke="#222" stroke-width=".9"/><rect x="1" y="12" width="5" height="5" fill="#fff" stroke="#222" stroke-width=".9"/><rect x="10" y="12" width="6" height="6" fill="#fff" stroke="#222" stroke-width=".9"/><path d="M8 8l7-7 1.500 1.500-7 7z" fill="#e8a030"/><path d="M6 5h4M3.500 8v4" stroke="#222"/>',
  drill:'<defs><linearGradient id="dr" x1="0" y1="0" x2="1" y2="0"><stop offset="0" stop-color="#c0c4d8"/><stop offset="1" stop-color="#3a4070"/></linearGradient></defs><path d="M9 2h7l-2 15-5 2z" fill="url(#dr)"/><path d="M9 8l6-3M8 13l6-3" stroke="#eee" stroke-width="1"/>',
  check:'<path d="M1 10l4-4 3 4 8-9 3 2-10 15z" fill="#2aa94e"/><path d="M5 7l3 4 8-9" fill="none" stroke="#6fd083" stroke-width=".7"/>',
  restore:'<rect x="1" y="2" width="18" height="16" fill="#fff" stroke="#222" stroke-width="1.500"/><rect x="1" y="2" width="18" height="3" fill="#222"/>',
  up:'<path d="M4 13l6-6 6 6" fill="none" stroke="#444" stroke-width="2"/>',
  down:'<path d="M4 7l6 6 6-6" fill="none" stroke="#444" stroke-width="2"/>',
  right:'<path d="M7 4l6 6-6 6" fill="none" stroke="#444" stroke-width="2"/>',
  chev:'<path d="M3 5l7 10 7-10" fill="none" stroke="#1b7a88" stroke-width="2.600"/>',
  windmill:'<g fill="#eaeaea" stroke="#eaeaea" stroke-width=".8"><path d="M10 9C6 9 3 7 3 4s3-3 5-2 3 3 2 7zM11 10c0-4 2-7 5-7s3 3 2 5-3 3-7 2zM10 11c4 0 7 2 7 5s-3 3-5 2-3-3-2-7zM9 10c0 4-2 7-5 7s-3-3-2-5 3-3 7-2z"/></g>',
  cortana:'<circle cx="9.500" cy="9.500" r="7.500" fill="none" stroke="#eee" stroke-width="2"/><circle cx="10" cy="9" r="2.500" fill="#eee"/><path d="M15 15l3 3" stroke="#eee" stroke-width="2"/>',
  nx12:'<path d="M3 9c0-4 5-7 9-6 5 1 6 6 3 10s-8 5-10 4" fill="#2a9fd8"/><path d="M6 1l7 1-2 7z" fill="#d8385a"/><path d="M1 19c5 0 13-3 17-11-1 7-8 12-13 12z" fill="#e8b030"/><path d="M9 8c2 2 4 1 5 0-1 4-5 7-9 7 1-3 2-5 4-7z" fill="#7ad0f0"/>',
  nxred:'<rect x="1" y="4" width="14" height="15" fill="#1e8f93"/><rect x="3" y="1" width="16" height="16" fill="#93241c"/><text x="11" y="13" font-size="9" font-weight="700" fill="#fff" text-anchor="middle">NX</text>',
  nx4:'<path d="M3 9c0-4 5-7 9-6 5 1 6 6 3 10s-8 5-10 4" fill="#2a9fd8"/><path d="M7 1l6 1-2 7z" fill="#d8385a"/><path d="M2 19c5 0 12-3 16-11-1 7-8 12-13 12z" fill="#e8b030"/>',
  prt:'<path d="M5 2l6-1 1 6 5 1 1 8-6 3-8-2-1-9z" fill="#2f74c8" stroke="#1c4f96" stroke-width=".5"/><path d="M6 4l3-.5.5 8 4 1" fill="none" stroke="#cfe3fa" stroke-width="1.500"/>',
  doc:'<path d="M4 3h3V1h5v2h3v16H4z" fill="none" stroke="currentColor" stroke-width="2"/><path d="M14 9l3 3-3 3" fill="none" stroke="currentColor" stroke-width="1.500"/>',
  ppt:'<rect x="1" y="1" width="18" height="18" rx="4" fill="#ed6c28"/><path d="M5 5h8a3 3 0 0 1 0 6H5M5 14h5" fill="none" stroke="#fff" stroke-width="1.600"/>',
  camtasia:'<path d="M10 1l8 9-8 9-8-9z" fill="#9fa4a0" stroke="#eee" stroke-width=".7"/><rect x="7" y="7" width="6" height="6" fill="#3a4a30"/><path d="M9 8.500l2 1.500-2 1.500z" fill="#9ad048"/>',
  recording:'<path d="M10 1l8 9-8 9-8-9z" fill="#9fa4a0" stroke="#eee" stroke-width=".7"/><rect x="7" y="6" width="6" height="6" fill="#3a4a30"/><circle cx="13" cy="15" r="4" fill="#d03030"/>',
  wechat:'<ellipse cx="8" cy="8" rx="7" ry="6" fill="#3fc34a"/><ellipse cx="14" cy="13" rx="5.500" ry="4.500" fill="#e0e0e0"/><circle cx="6" cy="6.500" r="1" fill="#124"/><circle cx="10" cy="6.500" r="1" fill="#124"/>',
  appblue:'<rect x="1" y="1" width="18" height="18" rx="3" fill="#1f70b8"/><path d="M12 5H7v10h5" fill="none" stroke="#fff" stroke-width="2.500"/><rect x="11" y="11" width="8" height="8" fill="#2fae5a"/><path d="M13 15l1.500 1.500L17 13" stroke="#fff" fill="none"/>',
  qq:'<ellipse cx="10" cy="9" rx="5.500" ry="7" fill="#222"/><ellipse cx="10" cy="12" rx="4" ry="4" fill="#fff"/><circle cx="8" cy="6" r="1.200" fill="#fff"/><circle cx="12" cy="6" r="1.200" fill="#fff"/><path d="M4 12c4 2 8 2 12 0l-1 3H5z" fill="#d02a20"/><path d="M5 18h4M11 18h4" stroke="#e8a020" stroke-width="2"/>',
  s360:'<circle cx="10" cy="10" r="9" fill="#e8c020"/><path d="M10 5v10M5 10h10" stroke="#2a8a2a" stroke-width="3"/>',
  net:'<rect x="1" y="2" width="5" height="5" fill="none" stroke="#eee" stroke-width="1.100"/><rect x="5" y="4" width="14" height="10" fill="none" stroke="#eee" stroke-width="1.100"/><path d="M3.500 7v10M3.500 17h8M12 14v3" stroke="#eee" stroke-width="1.100" fill="none"/>',
  trayup:'<path d="M3 13l7-7 7 7" fill="none" stroke="#eee" stroke-width="1.500"/>',
};

class NxIcon extends HTMLElement{
  connectedCallback(){
    const s=this.getAttribute('size')||18;
    this.attachShadow({mode:'open'}).innerHTML=`<style>:host{display:inline-flex;flex:none;width:${s}px;height:${s}px;line-height:0}svg{overflow:visible}</style><svg viewBox="0 0 20 20" width="${s}" height="${s}">${ICONS[this.getAttribute('name')]||''}</svg>`;
  }
}
customElements.define('nx-icon',NxIcon);

class NxCaret extends HTMLElement{
  constructor(){
    super();
    this.attachShadow({mode:'open'}).innerHTML=`<style>:host{display:inline-block;flex:none;width:0;height:0;border:3.5px solid transparent;border-top:4px solid var(--caret,#222);border-bottom:0}</style>`;
  }
}
customElements.define('nx-caret',NxCaret);

// a row of small tools, items are "center-x:name", the gaps come from the centers
class ToolRow extends HTMLElement{
  connectedCallback(){
    const size=+(this.getAttribute('size')||18);
    let cur=+(this.getAttribute('origin')||0),html='';
    for(const it of this.getAttribute('items').trim().split(/\s+/)){
      const [x,raw]=it.split(':');
      const on=raw.endsWith('!');
      const name=raw.replace('!','');
      if(name==='caret'){
        html+=`<nx-caret style="margin-left:${x-3.5-cur}px"></nx-caret>`;
        cur=+x+3.5;
      }else if(name==='sep'){
        html+=`<i style="margin-left:${x-.5-cur}px"></i>`;
        cur=+x+.5;
      }else if(on){
        html+=`<b style="margin-left:${x-11-cur}px"><nx-icon name="${name}" size="17"></nx-icon></b>`;
        cur=+x+11;
      }else{
        html+=`<nx-icon name="${name}" size="${size}" style="margin-left:${x-size/2-cur}px"></nx-icon>`;
        cur=+x+size/2;
      }
    }
    this.attachShadow({mode:'open'}).innerHTML=`<style>
      :host{display:flex;align-items:center;height:30px}
      i{display:block;flex:none;width:1px;height:24px;background:#e2e2e2}
      b{display:flex;flex:none;align-items:center;justify-content:center;width:22px;height:21px;background:#c6dde3;outline:1px solid #b8d2d9;outline-offset:-1px}
    </style>${html}`;
  }
}
customElements.define('tool-row',ToolRow);

class NxTitlebar extends HTMLElement{
  constructor(){
    super();
    this.attachShadow({mode:'open'}).innerHTML=`<style>
      :host{display:grid;grid-template-columns:947px 724px 57px;height:26px;align-items:center;background:#fff;font-size:11px;color:#222;overflow:hidden}
      .qat{display:flex;align-items:center;white-space:nowrap}
      .qat span{padding-bottom:2px}
      tool-row{height:26px}
      .t{font-size:13px;color:#333;padding-bottom:4px}
      .s{font-size:13px;font-weight:700;color:#109a94;letter-spacing:.3px;white-space:nowrap;overflow:hidden;padding-top:2px}
    </style>
    <div class="qat">
      <tool-row origin="0" size="17" items="10:caret 27:undo 42:sep 57:cut 80:copy 103:paste 117:sep 131:part 149:caret 158:sep 171:paint 186:sep 200:switchwin"></tool-row>
      <span style="margin-left:5px;width:44px">切换窗口</span>
      <tool-row origin="257.500" size="17" items="270:window"></tool-row>
      <span style="margin-left:5px;width:22px">窗口</span>
      <tool-row origin="305.500" size="12" items="313:caret 325:caretm"></tool-row>
    </div>
    <div class="t">NX 12.0.0.27 - 建模</div>
    <div class="s">SIEMENS</div>`;
  }
}
customElements.define('nx-titlebar',NxTitlebar);

class NxTabbar extends HTMLElement{
  constructor(){
    super();
    const tabs=['装配','曲线','分析','视图','渲染','工具','应用模块','内部'];
    this.attachShadow({mode:'open'}).innerHTML=`<style>
      :host{display:flex;height:28px;background:#d7d7d7;font-size:13px;color:#3a3a3a;align-items:stretch}
      .a{background:#fff;color:#17818e;padding:0 13px 2px 0;display:flex;align-items:center}
      .n{padding:0 13px 2px;display:flex;align-items:center;white-space:nowrap}
      .q{margin:4px 0 4px auto;width:117px;box-sizing:border-box;height:20px;background:#fff;border:1px solid #aaa;border-right:0;font-size:11px;color:#aaa;display:flex;align-items:center;justify-content:space-between;padding-left:1px;overflow:hidden}
      nx-icon{margin-right:-6px}
    </style>
    <div class="a">主页</div>${tabs.map(t=>`<div class="n">${t}</div>`).join('')}
    <div class="q"><span>查找命令</span><nx-icon name="search" size="16"></nx-icon></div>`;
  }
}
customElements.define('nx-tabbar',NxTabbar);

class NxRibbon extends HTMLElement{
  constructor(){
    super();
    this.attachShadow({mode:'open'}).innerHTML=`<style>
      :host{display:flex;height:93px;background:#fff;border-bottom:1px solid #d8d8d8;font-size:11px;color:#2a2a2a;overflow:hidden}
    </style><slot></slot>`;
  }
}
customElements.define('nx-ribbon',NxRibbon);

class RibbonGroup extends HTMLElement{
  connectedCallback(){
    const stack=this.hasAttribute('stack'),clip=this.hasAttribute('clip'),nolabel=this.hasAttribute('nolabel');
    this.attachShadow({mode:'open'}).innerHTML=`<style>
      :host{display:flex;flex:none;flex-direction:column;position:relative;box-sizing:border-box}
      :host::after{content:"";position:absolute;right:0;top:6px;bottom:4px;width:1px;background:#e3e3e3}
      .c{height:76px;display:flex;flex-direction:${stack?'column':'row'};align-items:flex-start}
      .l{height:14px;display:flex;align-items:center;color:#2a7d8b;white-space:nowrap}
      .l span{flex:1;text-align:${clip?'left':'center'};${clip?'margin-left:-5px;':'padding-right:4px;'}}
      nx-caret{margin-right:${clip?9:7}px}
      ::slotted(tool-row.r1){margin-top:6px}
    </style><div class="c"><slot></slot></div>
    ${nolabel?'':`<div class="l"><span>${this.getAttribute('label')}</span><nx-caret></nx-caret></div>`}`;
  }
}
customElements.define('ribbon-group',RibbonGroup);

class BigBtn extends HTMLElement{
  connectedCallback(){
    const boxed=this.hasAttribute('boxed');
    this.attachShadow({mode:'open'}).innerHTML=`<style>
      :host{display:flex;flex:none;flex-direction:column;align-items:center;padding-top:${boxed?5:6}px;white-space:nowrap}
      .i{height:${boxed?31:30}px;display:flex;align-items:center;justify-content:center;${boxed?'width:100%;border:1px solid #e6e6e6;border-radius:2px;':''}}
      .t{margin-top:${boxed?4:6}px;line-height:14px}
      nx-caret{margin-top:5px}
    </style><div class="i"><nx-icon name="${this.getAttribute('icon')}" size="${boxed?18:31}"></nx-icon></div>
    <div class="t">${this.getAttribute('label')}</div>${this.hasAttribute('caret')?'<nx-caret></nx-caret>':''}`;
  }
}
customElements.define('big-btn',BigBtn);

class ToolCol extends HTMLElement{
  constructor(){
    super();
    this.attachShadow({mode:'open'}).innerHTML=`<style>:host{display:flex;flex:none;flex-direction:column;padding-top:1px}</style><slot></slot>`;
  }
}
customElements.define('tool-col',ToolCol);

class SmallBtn extends HTMLElement{
  connectedCallback(){
    this.attachShadow({mode:'open'}).innerHTML=`<style>
      :host{display:flex;align-items:center;height:22px;white-space:nowrap}
      span{margin-left:5px}
      nx-caret{margin-left:7px}
    </style><nx-icon name="${this.getAttribute('icon')}" size="16"></nx-icon><span>${this.getAttribute('label')}</span>${this.hasAttribute('caret')?'<nx-caret></nx-caret>':''}`;
  }
}
customElements.define('small-btn',SmallBtn);

class SketchGallery extends HTMLElement{
  constructor(){
    super();
    this.attachShadow({mode:'open'}).innerHTML=`<style>
      :host{display:flex;margin-top:6px}
      .b{width:60px;height:65px;box-sizing:border-box;border:1px solid #e2e2e2;border-left:0}
      tool-row{height:30px}
      tool-row+tool-row{margin-top:3px}
      .s{display:flex;flex-direction:column;align-items:center;width:16px;margin-left:0;height:65px;justify-content:space-around;--caret:#333}
      .u{width:0;height:0;border:3.5px solid transparent;border-bottom:4px solid #bbb;border-top:0}
      .m{width:7px;border-top:1px solid #333;display:flex;flex-direction:column;align-items:center;padding-top:2px}
    </style>
    <div class="b">
      <tool-row origin="0" size="20" items="10:skrect 43:skline"></tool-row>
      <tool-row origin="0" size="20" items="10:skcircle 43:skplus"></tool-row>
    </div>
    <div class="s"><div class="u"></div><nx-caret></nx-caret><div class="m"><nx-caret></nx-caret></div></div>`;
  }
}
customElements.define('sketch-gallery',SketchGallery);

class NxCombo extends HTMLElement{
  connectedCallback(){
    this.attachShadow({mode:'open'}).innerHTML=`<style>
      :host{display:flex;flex:none;box-sizing:border-box;height:20px;border:1px solid #999;background:#fff;align-items:center;justify-content:space-between;padding:0 6px 0 2px;font-size:11px;color:#222}
    </style><span><slot></slot></span><nx-caret></nx-caret>`;
  }
}
customElements.define('nx-combo',NxCombo);

class NxSelbar extends HTMLElement{
  constructor(){
    super();
    this.attachShadow({mode:'open'}).innerHTML=`<style>
      :host{display:flex;align-items:center;height:28px;padding-top:2px;background:#fff;border-bottom:2px solid #aaa;box-sizing:content-box}
      tool-row{height:24px}
    </style>
    <nx-combo style="margin-left:3px;width:133px">无选择过滤器</nx-combo>
    <nx-combo style="margin-left:9px;width:140px">整个装配</nx-combo>
    <tool-row origin="285" size="16" items="300:sel1 326:sel2 348:sel3 365:caret 387:sel4 411:sel5 435:sel6 459:sel7 477:caret 497:sel8 521:sel9 548:hl1! 573:hl2! 597:hl3! 622:sw1 647:sw2! 671:sw3! 697:sw4 722:sw5! 747:sw6 772:sw7! 797:hl3! 822:sw9 847:sw10 871:sw11 891:sep 910:vw1 936:vw2 960:vw3 986:vw4 1010:vw5 1036:vw6 1054:caret 1072:vw7 1090:caret 1110:vw8 1129:caret 1146:vw9 1164:caret 1177:sep"></tool-row>`;
  }
}
customElements.define('nx-selbar',NxSelbar);

class TreeRow extends HTMLElement{
  connectedCallback(){
    const c=this.hasAttribute('nocheck')?'':'<nx-icon name="check" size="15"></nx-icon>';
    this.attachShadow({mode:'open'}).innerHTML=`<style>
      :host{display:grid;grid-template-columns:144px 96px;height:20px;box-sizing:border-box;border-bottom:1px solid #efefef;font-size:12px;color:#444}
      :host(:nth-child(odd)){background:#fafafa}
      .n{display:flex;align-items:center;border-right:1px solid #e8e8e8;white-space:nowrap;overflow:hidden}
      nx-icon{flex:none}
      .n nx-icon{margin-left:-3px;margin-right:2px}
      .k{display:flex;align-items:center;padding:1px 0 0 6px}
    </style><div class="n"><nx-icon name="${this.getAttribute('icon')}" size="18"></nx-icon><span>${this.getAttribute('text')}</span></div><div class="k">${c}</div>`;
  }
}
customElements.define('tree-row',TreeRow);

class NavSection extends HTMLElement{
  constructor(){
    super();
    this.attachShadow({mode:'open'}).innerHTML=`<style>
      :host{display:flex;align-items:center;justify-content:flex-end;width:258px;height:24px;box-sizing:border-box;border-bottom:2px solid #cfcfcf;padding-right:4px}
    </style><nx-icon name="chev" size="16"></nx-icon>`;
  }
}
customElements.define('nav-section',NavSection);

class NxNavigator extends HTMLElement{
  constructor(){
    super();
    const rows=[['body','体',200]];
    for(let i=201;i<=208;i++)rows.push(['subtract','减去',i]);
    for(let i=209;i<=211;i++)rows.push(['block','块',i]);
    rows.push(['subtract','减去',212],['subtract','减去',213],['cyl','圆柱',214],['cyl','圆柱',215],['union','合并',216],['cyl','圆柱',217],['cyl','圆柱',218],['body','体',219],['union','合并',220],['subtract','减去',221]);
    for(let i=222;i<=227;i++)rows.push(['body','体',i]);
    for(let i=228;i<=231;i++)rows.push(['subtract','减去',i]);
    const html=rows.map(r=>`<tree-row icon="${r[0]}" text="${r[1]} (${r[2]})"></tree-row>`).join('')
      +'<tree-row icon="sketch" text="草图 (232) &quot;SKETCH..."></tree-row><tree-row icon="drill" text="钻形孔 (233)"></tree-row><tree-row icon="drill" text="钻形孔 (234)" nocheck></tree-row>';
    this.attachShadow({mode:'open'}).innerHTML=`<style>
      :host{display:block;flex:none;width:267px;height:837px;background:#fff;border-right:1px solid #9a9a9a;box-sizing:content-box;font-size:12px;color:#333}
      .hd{height:25px;padding-bottom:4px;display:flex;align-items:center;justify-content:space-between;width:251px}
      .hd span{margin-left:-6px}
      .tb{width:257px;height:728px;box-sizing:border-box;border-top:1px solid #d4d4d4;border-right:1px solid #d0d0d0;background:#f3f3f3}
      .th{display:grid;grid-template-columns:144px 99px 13px;height:19px;background:#f0f0f0;border-bottom:1px solid #d8d8d8;box-sizing:content-box}
      .th div{border-right:1px solid #d8d8d8;display:flex;align-items:center;padding-left:6px;overflow:hidden;white-space:nowrap}
      .th div:first-child{padding-left:0}
      .bd{display:flex;height:687px;overflow:hidden}
      .rows{width:240px;background:#fff;overflow:hidden}
      .v{width:16px;background:#f0f0f0;display:flex;flex-direction:column;align-items:center;height:687px}
      .thumb{width:15px;height:94px;background:#c4c4c4;margin-top:556px}
      .h{display:flex;align-items:center;height:16px;background:#f0f0f0;margin-top:0}
      .ht{width:153px;height:16px;background:#c6c6c6}
      .g{height:3px;width:258px;background:#bbb}
    </style>
    <div class="hd"><span>器</span><nx-icon name="restore" size="12"></nx-icon></div>
    <div class="tb">
      <div class="th"><div>-</div><div>最新</div><div>阶</div></div>
      <div class="bd"><div class="rows">${html}</div>
        <div class="v"><nx-icon name="up" size="11" style="margin-top:3px"></nx-icon><div class="thumb"></div><nx-icon name="down" size="11" style="margin-top:5px"></nx-icon></div>
      </div>
      <div class="h"><div class="ht"></div><nx-icon name="right" size="12" style="margin-left:72px"></nx-icon></div>
    </div>
    <div class="g"></div>
    <nav-section style="height:23px"></nav-section><nav-section></nav-section><nav-section></nav-section>`;
  }
}
customElements.define('nx-navigator',NxNavigator);

const greenHole=(x,y)=>`<g transform="translate(${x} ${y})">
  <ellipse rx="35" ry="25" fill="#8a8a8a" stroke="#222" stroke-width="1.500"/>
  <ellipse cy="2.500" rx="31.500" ry="22" fill="#12e018" stroke="#0c4a12" stroke-width="1"/>
  <path d="M-18 1L-5-10V4L-13 8z" fill="#1f9a26" stroke="#063" stroke-width=".8"/>
  <path d="M-5-10L13-8 19 5 7 7-5 4z" fill="#0a6a14" stroke="#063" stroke-width=".8"/>
  <path d="M-13 8L-5 4 7 7 19 5 7 16-13 11z" fill="#12e018" stroke="#063" stroke-width=".8"/>
</g>`;
const greyHole=(x,y,rx,ry,ring)=>`<g transform="translate(${x} ${y})">
  <ellipse rx="${rx}" ry="${ry}" fill="${ring?'#fff':'#8d8d8d'}" stroke="#222" stroke-width="1.500"/>
  <ellipse cy="${ring?1.500:.5}" rx="${rx-(ring?3:1)}" ry="${ry-(ring?3:1)}" fill="url(#gh)"/>
  <path d="M-7 0H7M0-7V7" stroke="#3c55d6" stroke-width="1.500"/>
</g>`;

class NxViewport extends HTMLElement{
  constructor(){
    super();
    this.attachShadow({mode:'open'}).innerHTML=`<style>
      :host{display:flex;flex-direction:column;flex:1;height:837px;background:#fff}
      .tabs{display:flex;height:20px;background:#fff;border-bottom:1px solid #4e9dbb;font-size:12px;color:#444;flex:none}
      .tab{display:flex;align-items:center;white-space:nowrap}
      .on{background:#4e9dbb;color:#d9eef5}
      .x{font-weight:700;color:#fff;font-size:12px;margin-left:8px}
      .cv{flex:1;position:relative;background:linear-gradient(#b4b6b8,#c5c6c8 25%,#dcdde0 60%,#e6e7e9);overflow:hidden}
      svg{position:absolute;left:0;top:0;display:block}
    </style>
    <div class="tabs">
      <div class="tab" style="margin-left:5px;width:128px"><nx-icon name="prt" size="15" style="margin-left:1px"></nx-icon><span style="margin-left:6px">_model1.prt</span><nx-icon name="doc" size="11" style="margin-left:7px"></nx-icon></div>
      <div class="tab on" style="width:133px"><nx-icon name="prt" size="15" style="margin-left:9px"></nx-icon><span style="margin-left:4px">_model2.prt</span><nx-icon name="doc" size="11" style="margin-left:8px"></nx-icon><span class="x">✕</span></div>
    </div>
    <div class="cv">
    <svg viewBox="268 201 1460 816" width="1460" height="816">
      <defs>
        <linearGradient id="gh" x1="0" y1="0" x2="1" y2="0"><stop offset="0" stop-color="#8f8f8f"/><stop offset=".5" stop-color="#b5b5b5"/><stop offset="1" stop-color="#808080"/></linearGradient>
        <linearGradient id="sl" x1="0" y1="0" x2="1" y2="0"><stop offset="0" stop-color="#a4a4a4"/><stop offset="1" stop-color="#b8b8b8"/></linearGradient>
        <linearGradient id="el" x1="0" y1="0" x2="1" y2="1"><stop offset="0" stop-color="#fff"/><stop offset="1" stop-color="#8fc6ea"/></linearGradient>
      </defs>
      <g stroke="none">
        <path d="M636 600L1123 950V1017H936L636 808z" fill="#5a7a9c"/>
        <path d="M636 808L936 1017H722L636 959z" fill="#9c5558"/>
        <path d="M636 959L722 1017H636z" fill="#a3a3a3"/>
        <path d="M1609 700V807L1310 1017H1123V950z" fill="#6b90b8"/>
        <path d="M1609 807V957L1522 1017H1310z" fill="#b16064"/>
        <path d="M1609 957V1017H1522z" fill="#b0b0b0"/>
      </g>
      <g stroke="#2a2d33" stroke-width="1.600" fill="none">
        <path d="M636 660V1017M1123 998V1017M1609 743V1017"/>
        <path d="M636 808L936 1017M1609 807L1310 1017M636 959L722 1017M1609 957L1522 1017"/>
      </g>
      <g stroke="#fff" stroke-width="1" fill="none" stroke-dasharray="2 2">
        <path d="M636 808L936 1017M1609 807L1310 1017"/>
      </g>
      <ellipse cx="878" cy="902" rx="12" ry="19" transform="rotate(-18 878 902)" fill="url(#el)" stroke="#2a2d33" stroke-width="1.300"/>
      <path d="M575 554L1184 978V1040L574 620z" fill="url(#sl)"/>
      <path d="M1184 978L1670 638V700L1184 1040z" fill="#b2b2b2"/>
      <path d="M1061 215L1670 638 1184 978 575 554z" fill="#fefefe"/>
      <g stroke="#24272c" stroke-width="1.600" fill="none" stroke-linejoin="round">
        <path d="M1061 215L1670 638 1184 978 575 554z"/>
        <path d="M575 554L574 620L1184 1040L1670 700V638M1184 978V1040"/>
      </g>
      ${greenHole(1025,393)}${greenHole(830,530)}${greenHole(1414,665)}${greenHole(1220,800)}
      ${greyHole(876,701,18,12,false)}${greyHole(1104,737,20,14,true)}
      <path d="M1059 486H1073M1066 479V493M1277 649H1291M1284 642V656" stroke="#4a5aa8" stroke-width="1.300"/>
      <g stroke="#cfcfcf" stroke-width="1" fill="none">
        <path d="M1122 725V807L1170 840V727L1122 758L1170 790L1170 840"/>
        <path d="M1122 807L1207 748M1170 840L1210 868M1170 840L1217 807M1170 775L1197 793"/>
      </g>
      <path d="M1119.500 728L1122 716L1124.500 728z" fill="#8b8b8b"/><path d="M1206 748l6-8 2 5z" fill="#aaa"/><path d="M1205 865l9 5-7 2z" fill="#aaa"/>
      <g font-size="13" fill="#c8c8c8" text-anchor="middle"><text x="1123" y="711">Z</text><text x="1222" y="743">Y</text><text x="1222" y="882">X</text></g>
      <circle cx="1032" cy="587" r="24" fill="#ffff00"/>
      <g transform="translate(1047 602) rotate(-42)" stroke="#111" stroke-width="1" fill="#fff">
        <rect x="-9" y="-9" width="4" height="11" rx="2"/><rect x="-5" y="-11" width="4" height="13" rx="2"/><rect x="-1" y="-11" width="4" height="13" rx="2"/><rect x="3" y="-9" width="4" height="11" rx="2"/>
        <path d="M-9 0H7V7H-6z"/><rect x="-5" y="7" width="11" height="6" fill="#000"/>
      </g>
      <path d="M352 919L370 931V950L352 963L333 950V931z" fill="#d3d4d6" stroke="#b8b9bb"/>
      <path d="M333 931L352 943L370 931M352 943V963M352 919V931" stroke="#bcbdbf" fill="none"/>
      <path d="M338 945L368 928" stroke="#a9b8ac" stroke-width="2.500"/>
      <path d="M333 950V926" stroke="#16308f" stroke-width="3"/><path d="M329 928L333 918L337 928z" fill="#16308f"/>
      <path d="M333 950L357 966" stroke="#d23a3a" stroke-width="3"/><path d="M353 969L364 973L358 962z" fill="#d23a3a"/>
      <circle cx="333" cy="950" r="3" fill="#d8d8d8" stroke="#888" stroke-width=".5"/>
      <g font-size="13" text-anchor="middle"><text x="333" y="920" fill="#3a4fc0">Z</text><text x="368" y="930" fill="#6f8f80">Y</text><text x="369" y="980" fill="#d07070">X</text></g>
    </svg>
    </div>`;
  }
}
customElements.define('nx-viewport',NxViewport);

class NxStatus extends HTMLElement{
  constructor(){
    super();
    this.attachShadow({mode:'open'}).innerHTML=`<style>
      :host{display:flex;align-items:center;height:23px;box-sizing:border-box;border-top:1px solid #a8a8a8;background:#fff;font-size:11px;font-weight:500;color:#222;padding-bottom:2px}
    </style><slot></slot>`;
  }
}
customElements.define('nx-status',NxStatus);

class TaskItem extends HTMLElement{
  connectedCallback(){
    this.attachShadow({mode:'open'}).innerHTML=`<style>
      :host{display:flex;flex:none;align-items:center;height:40px;box-sizing:border-box;padding:0 0 1px 8px;border-bottom:3px solid #79aede;color:#dcdcdc;font-size:13px;white-space:nowrap;overflow:hidden}
      :host([active]){background:#2d2d2d;padding-left:12px;font-size:12.500px}
      span{margin-left:5px}
    </style><nx-icon name="${this.getAttribute('icon')}" size="21"></nx-icon><span>${this.getAttribute('text')}</span>`;
  }
}
customElements.define('task-item',TaskItem);

class NxTaskbar extends HTMLElement{
  constructor(){
    super();
    this.attachShadow({mode:'open'}).innerHTML=`<style>
      :host{display:flex;height:40px;background:#0f0f0f;align-items:flex-start;color:#e8e8e8;overflow:hidden}
      task-item{margin-right:8px}
      .tray{margin-left:auto;margin-right:15px;display:flex;align-items:center;height:40px;font-size:12px}
      .clk{display:flex;flex-direction:column;align-items:center;width:78px;font-size:12.500px;line-height:18px}
    </style>
    <nx-icon name="windmill" size="24" style="margin:8px 0 0 14px"></nx-icon>
    <nx-icon name="cortana" size="22" style="margin:9px 21px 0 27px"></nx-icon>
    <task-item active icon="nx12" text="NX 12.0.0.27 - 建模" style="width:160px;margin-right:5px"></task-item>
    <task-item icon="nxred" text="NX - 建模" style="width:153px"></task-item>
    <task-item icon="nx4" text="NX 4.0.0.25 - Mo..." style="width:152px"></task-item>
    <task-item icon="nx4" text="NX 4.0.0.25 - Mo..." style="width:152px"></task-item>
    <task-item icon="nx4" text="NX 4.0.0.25 - Mo..." style="width:152px"></task-item>
    <task-item icon="ppt" text="NX12.0软件.pptx ..." style="width:153px"></task-item>
    <task-item icon="camtasia" text="Camtasia Studio -..." style="width:152px;margin-right:9px"></task-item>
    <task-item icon="recording" text="Recording..." style="width:152px"></task-item>
    <div class="tray">
      <tool-row origin="1390" size="18" items="1437:trayup 1461:wechat 1485:appblue 1507:qq 1532:qq 1557:s360 1581:net"></tool-row>
      <span style="margin-left:9px;font-size:13px">ENG</span>
      <div class="clk" style="margin-left:16px;margin-right:2px"><span>11:04 周二</span><span>2021/5/11</span></div>
    </div>`;
  }
}
customElements.define('nx-taskbar',NxTaskbar);
</script>
</body>
</html>
